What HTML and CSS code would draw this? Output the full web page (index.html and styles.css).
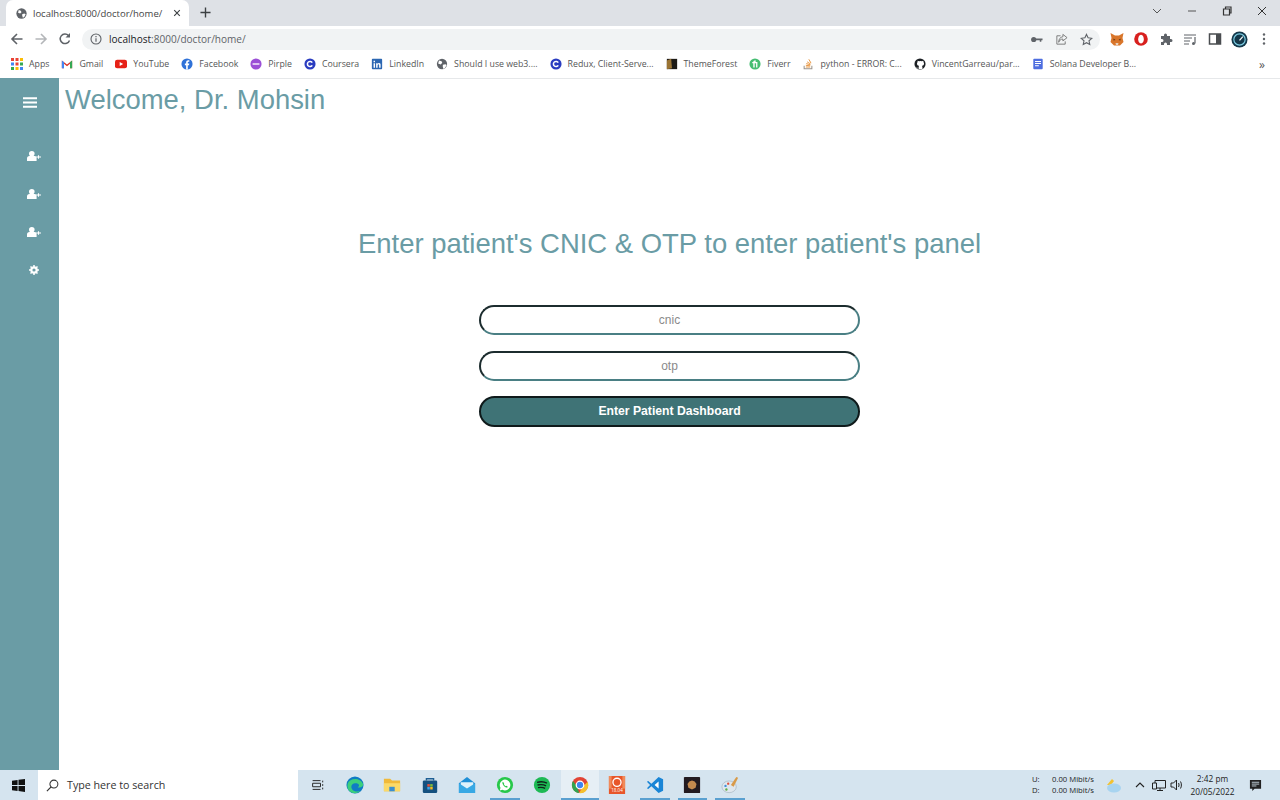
FILE: index.html
```html
<!DOCTYPE html>
<html lang="en">
<head>
  <meta charset="UTF-8">
  <title>localhost:8000/doctor/home/</title>
  <link rel="stylesheet" href="styles.css">
</head>
<body>
  <header class="chrome">
    <div class="tabstrip">
      <div class="tab">
        <svg class="tab-icon" viewBox="0 0 16 16"><circle cx="8" cy="8" r="7.500" fill="#5f6368"/><path d="M4 3l3 1 1 2-2 2-3-1zM9 9l3-1 2 1-2 4-2 1-1-3z" fill="#fff"/></svg>
        <span class="tab-title">localhost:8000/doctor/home/</span>
        <svg class="tab-close" viewBox="0 0 10 10"><path d="M1.500 1.500l7 7M8.500 1.500l-7 7" stroke="#3c4043" stroke-width="1.400"/></svg>
      </div>
      <svg class="new-tab" viewBox="0 0 12 12"><path d="M6 .5v11M.5 6h11" stroke="#3c4043" stroke-width="1.500"/></svg>
      <div class="window-controls">
        <svg class="win-btn" viewBox="0 0 12 12"><path d="M2 4l4 4 4-4" fill="none" stroke="#555" stroke-width="1"/></svg>
        <svg class="win-btn" viewBox="0 0 12 12"><path d="M2 6h8" stroke="#555" stroke-width="1"/></svg>
        <svg class="win-btn" viewBox="0 0 12 12"><path d="M2.500 4h6v6h-6zM4.500 4V2h5.500v6H8.500" fill="none" stroke="#333" stroke-width="1.200"/></svg>
        <svg class="win-btn" viewBox="0 0 12 12"><path d="M2 2l8 8M10 2l-8 8" stroke="#333" stroke-width="1"/></svg>
      </div>
    </div>

    <div class="toolbar">
      <svg class="nav-btn" viewBox="0 0 14 14"><path d="M12.500 7H2M7 2L2 7l5 5" fill="none" stroke="#5f6368" stroke-width="1.600"/></svg>
      <svg class="nav-btn" viewBox="0 0 14 14"><path d="M1.500 7H12M7 2l5 5-5 5" fill="none" stroke="#b4b6b9" stroke-width="1.600"/></svg>
      <svg class="nav-btn" viewBox="0 0 14 14"><path d="M11.500 8.500A4.800 4.800 0 1 1 10.500 3.500" fill="none" stroke="#5f6368" stroke-width="1.500"/><path d="M12 1v4.500H7.500z" fill="#5f6368"/></svg>
      <div class="omnibox">
        <svg class="info-icon" viewBox="0 0 12 12"><circle cx="6" cy="6" r="5" fill="none" stroke="#5f6368" stroke-width="1.100"/><path d="M6 5.200v3.600M6 3v1.200" stroke="#5f6368" stroke-width="1.200"/></svg>
        <span class="url"><b>localhost</b>:8000/doctor/home/</span>
        <div class="omni-actions">
          <svg class="omni-icon" viewBox="0 0 14 14"><circle cx="4" cy="7" r="2.800" fill="#5f6368"/><path d="M6 5.800h7.500v2H12.200v1.500H10.500V7.800H6z" fill="#5f6368"/></svg>
          <svg class="omni-icon" viewBox="0 0 14 14"><path d="M6 3H2v9h9V9" fill="none" stroke="#777" stroke-width="1"/><path d="M8.500 1.500L13 5l-4.500 3.500V6.500C6 6.500 4.800 8 4 10c0-3.500 1.500-5.500 4.500-6z" fill="none" stroke="#777" stroke-width="1"/></svg>
          <svg class="omni-icon" viewBox="0 0 14 14"><path d="M7 1.500l1.700 3.700 4 .5-3 2.700.8 4L7 10.400l-3.500 2 .8-4-3-2.700 4-.5z" fill="none" stroke="#5f6368" stroke-width="1.200"/></svg>
        </div>
      </div>
      <div class="extensions">
        <div class="ext"><svg viewBox="0 0 14 14"><path d="M.5 1L5 3.500h4L13.500 1l-1 5 1 4-3.500 3.500H4L.5 10l1-4z" fill="#d9762b"/><path d="M3.500 6.500l2 1.500-2 .5zM10.500 6.500l-2 1.500 2 .5z" fill="#5a3414"/><path d="M5.500 11h3l-.5 2H6z" fill="#e9d3be"/></svg></div>
        <div class="ext"><svg viewBox="0 0 14 14"><circle cx="7" cy="7" r="6.800" fill="#d8201e"/><path d="M7 2.800c2 0 2.800 2.500 2.800 4.500S9 11.500 7 11.500 4.200 9.300 4.200 7.300 5 2.800 7 2.800z" fill="#fff"/></svg></div>
        <div class="ext"><svg viewBox="0 0 14 14"><path d="M2 4h3V3a1.500 1.500 0 0 1 3 0v1h3v3h1a1.500 1.500 0 0 1 0 3h-1v3H8v-1a1.500 1.500 0 0 0-3 0v1H2v-3h1a1.500 1.500 0 0 0 0-3H2z" fill="#5f6368"/></svg></div>
        <div class="ext"><svg viewBox="0 0 14 14"><path d="M1 3h12M1 6h8M1 9h6M1 12h5" stroke="#5f6368" stroke-width="1"/><path d="M12 5v6.500" stroke="#5f6368" stroke-width="1.200"/><circle cx="10.500" cy="11.500" r="1.500" fill="#5f6368"/></svg></div>
        <div class="ext"><svg viewBox="0 0 14 14"><path d="M1.500 2h11v10h-11z" fill="#fff" stroke="#4a4d50" stroke-width="1.500"/><path d="M8 2h4.500v10H8z" fill="#4a4d50"/></svg></div>
        <div class="ext ext-big"><svg viewBox="0 0 18 18"><circle cx="9" cy="9" r="8.500" fill="#14384a"/><circle cx="9" cy="9" r="6" fill="none" stroke="#7fd0e6" stroke-width="1.200"/><path d="M9 10l3.500-4" stroke="#fff" stroke-width="1.300"/></svg></div>
        <div class="ext"><svg viewBox="0 0 14 14"><circle cx="7" cy="2.500" r="1.200" fill="#5f6368"/><circle cx="7" cy="7" r="1.200" fill="#5f6368"/><circle cx="7" cy="11.500" r="1.200" fill="#5f6368"/></svg></div>
      </div>
    </div>

    <nav class="bookmarks">
      <a class="bm bm-apps"><svg viewBox="0 0 12 12"><g fill="#ea4335"><rect width="3" height="3"/><rect x="4.500" width="3" height="3"/></g><rect x="9" width="3" height="3" fill="#fbbc04"/><rect y="4.500" width="3" height="3" fill="#4285f4"/><rect x="4.500" y="4.500" width="3" height="3" fill="#ea4335"/><rect x="9" y="4.500" width="3" height="3" fill="#34a853"/><rect y="9" width="3" height="3" fill="#34a853"/><rect x="4.500" y="9" width="3" height="3" fill="#fbbc04"/><rect x="9" y="9" width="3" height="3" fill="#4285f4"/></svg>Apps</a>
      <a class="bm bm-gmail"><svg viewBox="0 0 14 14"><path d="M1 3l6 4.500L13 3v9h-2.500V6.800L7 9.500 3.500 6.800V12H1z" fill="#d93025"/><path d="M1 3v9h2.500V5z" fill="#4285f4"/><path d="M13 3v9h-2.500V5z" fill="#34a853"/></svg>Gmail</a>
      <a class="bm bm-youtube"><svg viewBox="0 0 14 14"><rect y="2" width="14" height="10" rx="2.500" fill="#e62117"/><path d="M5.500 4.800L9.500 7l-4 2.200z" fill="#fff"/></svg>YouTube</a>
      <a class="bm bm-facebook"><svg viewBox="0 0 14 14"><circle cx="7" cy="7" r="6.500" fill="#2f72d8"/><path d="M6 13.500V8.500H4.500V6.500H6V5c0-1.700 1-2.500 2.500-2.500h1.200v1.900h-.9c-.7 0-.9.400-.9 1v1h1.800L9.300 8.500H7.900v5z" fill="#fff"/></svg>Facebook</a>
      <a class="bm bm-pirple"><svg viewBox="0 0 14 14"><circle cx="7" cy="7" r="6.500" fill="#9b4fd6"/><rect x="3" y="6" width="8" height="2" fill="#e8d7f6"/></svg>Pirple</a>
      <a class="bm bm-coursera"><svg viewBox="0 0 14 14"><circle cx="7" cy="7" r="6.500" fill="#2a3cc0"/><path d="M9.600 8.500a3 3 0 1 1 0-3" fill="none" stroke="#fff" stroke-width="1.800"/></svg>Coursera</a>
      <a class="bm bm-linkedin"><svg viewBox="0 0 14 14"><rect x="1" y="1" width="12" height="12" rx="1" fill="#2c67b2"/><path d="M3 6h1.700v5.500H3zM3 3.200h1.700v1.700H3zM6 6h1.600v.8c.4-.6 1-1 1.800-1 1.300 0 1.800.9 1.800 2.200v3.500H9.500V8.300c0-.7-.2-1.100-.8-1.100s-1 .4-1 1.200v3.100H6z" fill="#fff"/></svg>LinkedIn</a>
      <a class="bm bm-web3"><svg viewBox="0 0 14 14"><circle cx="7" cy="7" r="6" fill="#5f6368"/><path d="M3.500 2.800l3 1 .8 1.800L5.500 7.500l-3-1zM8 8l3-.8 1.500 1-2 3.500-1.800 1-.8-2.500z" fill="#fff"/></svg>Should I use web3....</a>
      <a class="bm bm-redux"><svg viewBox="0 0 14 14"><circle cx="7" cy="7" r="6.500" fill="#2a3cc0"/><path d="M9.600 8.500a3 3 0 1 1 0-3" fill="none" stroke="#fff" stroke-width="1.800"/></svg>Redux, Client-Serve...</a>
      <a class="bm bm-forest"><svg viewBox="0 0 14 14"><rect x="1" y="1" width="12" height="12" fill="#1c1a16"/><path d="M1 3l5-2 1 11-6 1z" fill="#9a7434"/></svg>ThemeForest</a>
      <a class="bm bm-fiverr"><svg viewBox="0 0 14 14"><circle cx="7" cy="7" r="6.500" fill="#45bd72"/><path d="M5 11V6H3.800V4.800H5C5 3.500 6 3 8 3v1.300c-1 0-1.400.1-1.400.5h3.200V11H8.300V6H6.600v5z" fill="#fff"/></svg>Fiverr</a>
      <a class="bm bm-python"><svg viewBox="0 0 14 14"><path d="M2.500 9v3.500h9V9" fill="none" stroke="#9a938a" stroke-width="1.200"/><path d="M4.500 10.500h5M4.500 8.500l5 .6M5 6.500l4.700 1.500M6 4.500l4 2.500M8 1.500L10.500 6" stroke="#e8933a" stroke-width="1.100"/></svg>python - ERROR: C...</a>
      <a class="bm bm-github"><svg viewBox="0 0 14 14"><circle cx="7" cy="7" r="6.500" fill="#1b1f23"/><path d="M4 12.800V11c-1.500.2-2-.5-2.500-1.500M9.800 12.800V10.500c0-.7-.2-1.100-.5-1.300 1.500-.2 2.400-1 2.400-2.700 0-.8-.3-1.300-.7-1.800.1-.5.100-1-.1-1.600-.6 0-1.100.3-1.600.7a6 6 0 0 0-3.400 0C5.400 3.400 4.900 3.100 4.300 3.100c-.2.600-.2 1.100-.1 1.600-.4.500-.7 1-.7 1.800 0 1.700.9 2.500 2.400 2.700-.3.200-.5.600-.5 1.300v2.300z" fill="#fff"/></svg>VincentGarreau/par...</a>
      <a class="bm bm-solana"><svg viewBox="0 0 14 14"><rect x="1.500" y="1" width="11" height="12" rx="1" fill="#4e6ee0"/><path d="M3.500 4h7M3.500 6.500h7M3.500 9h4.500" stroke="#fff" stroke-width="1.200"/></svg>Solana Developer B...</a>
      <span class="bm-more">»</span>
    </nav>
  </header>

  <div class="app">
    <aside class="sidebar">
      <svg class="menu-icon" viewBox="0 0 14 11"><path d="M0 1.200h14M0 5.500h14M0 9.800h14" stroke="#fff" stroke-width="2"/></svg>
      <ul class="side-nav">
        <li><svg viewBox="0 0 14 10"><path d="M2 2.600a2.800 2.600 0 0 1 5.600 0c0 1-.5 2-1 2.400h1c1.400 0 2 1 2 2.500V10H0V7.500C0 6 .8 5 2.500 5h.5C2.400 4.500 2 3.600 2 2.600z" fill="#fff"/><path d="M8.500 6H14M11.500 4.300v3.400" stroke="#fff" stroke-width="1.100"/></svg></li>
        <li><svg viewBox="0 0 14 10"><path d="M2 2.600a2.800 2.600 0 0 1 5.600 0c0 1-.5 2-1 2.400h1c1.400 0 2 1 2 2.500V10H0V7.500C0 6 .8 5 2.500 5h.5C2.400 4.500 2 3.600 2 2.600z" fill="#fff"/><path d="M8.500 6H14M11.500 4.300v3.400" stroke="#fff" stroke-width="1.100"/></svg></li>
        <li><svg viewBox="0 0 14 10"><path d="M2 2.600a2.800 2.600 0 0 1 5.600 0c0 1-.5 2-1 2.400h1c1.400 0 2 1 2 2.500V10H0V7.500C0 6 .8 5 2.500 5h.5C2.400 4.500 2 3.600 2 2.600z" fill="#fff"/><path d="M8.500 6H14M11.500 4.300v3.400" stroke="#fff" stroke-width="1.100"/></svg></li>
        <li><svg class="cog" viewBox="0 0 10 10"><circle cx="5" cy="5" r="2.700" fill="none" stroke="#fff" stroke-width="2.200"/><path d="M5 0v2M5 8v2M0 5h2M8 5h2M1.500 1.500l1.300 1.300M7.200 7.200l1.300 1.300M8.500 1.500L7.200 2.800M2.800 7.200L1.500 8.500" stroke="#fff" stroke-width="1.500"/></svg></li>
      </ul>
    </aside>

    <main class="content">
      <h1 class="welcome">Welcome, Dr. Mohsin</h1>
      <h2 class="prompt">Enter patient's CNIC &amp; OTP to enter patient's panel</h2>
      <form class="otp-form">
        <input class="field" type="text" placeholder="cnic">
        <input class="field" type="text" placeholder="otp">
        <button class="submit" type="button">Enter Patient Dashboard</button>
      </form>
    </main>
  </div>

  <footer class="taskbar">
    <svg class="start" viewBox="0 0 14 14"><path d="M0 2l6-1v5.500H0zM7 .8L14 0v6.500H7zM0 7.500h6V13l-6-1zM7 7.500h7V14l-7-1z" fill="#111"/></svg>
    <div class="search">
      <svg viewBox="0 0 14 14"><circle cx="8.500" cy="5.500" r="4.300" fill="none" stroke="#333" stroke-width="1.100"/><path d="M5.500 8.500L1 13" stroke="#333" stroke-width="1.300"/></svg>
      <span>Type here to search</span>
    </div>
    <div class="task-icons">
      <div class="task"><svg class="task-view" viewBox="0 0 16 16"><path d="M3 3h9M3 13h9M3 6h9v4H3zM14.500 3v2M14.500 7v2M14.500 11v2" fill="none" stroke="#222" stroke-width="1.100"/></svg></div>
      <div class="task"><svg viewBox="0 0 20 20"><circle cx="10" cy="10" r="9.500" fill="#0f7cc4"/><path d="M2 8C4 2 16 1 19 9c.500 3-3 4.500-6 3.500 3-2 1-5-3-4.500C6 8.500 5 12 7 15c2 2.500 6 3 9 1.500-3 3.500-9 3.500-12 .5C1.500 14.500 1 11 2 8z" fill="#3ccf7c"/></svg></div>
      <div class="task"><svg viewBox="0 0 20 20"><path d="M1 3h7l2 2h9v12H1z" fill="#f0b93a"/><path d="M1 8h18v9H1z" fill="#fbd968"/><path d="M7 12h6v5H7z" fill="#3a8fd0"/></svg></div>
      <div class="task"><svg viewBox="0 0 20 20"><path d="M6 5V3h8v2" fill="none" stroke="#1d5e94" stroke-width="1.500"/><rect x="2" y="5" width="16" height="14" rx="1.500" fill="#14507f"/><rect x="7" y="9" width="2.800" height="2.800" fill="#e8503a"/><rect x="10.200" y="9" width="2.800" height="2.800" fill="#7fba3a"/><rect x="7" y="12.200" width="2.800" height="2.800" fill="#3aa4e8"/><rect x="10.200" y="12.200" width="2.800" height="2.800" fill="#f5b81e"/></svg></div>
      <div class="task"><svg viewBox="0 0 20 20"><path d="M1 8l9-7 9 7v11H1z" fill="#1f8fd6"/><path d="M3 7h14v6l-7 4-7-4z" fill="#dff2fb"/><path d="M1 8l9 6 9-6v11H1z" fill="#38a8e4"/></svg></div>
      <div class="task open"><svg viewBox="0 0 20 20"><circle cx="10" cy="10" r="9" fill="#27c84a"/><path d="M10 4a6 6 0 0 1 0 12 6 6 0 0 1-2.800-.7L4.200 16l.8-2.900A6 6 0 0 1 10 4z" fill="#fff"/><path d="M7.500 6.500c-1 1 0 3.500 1.500 4.800s3.500 2 4.300 1l-1.500-1.500-1 .5c-1-.5-1.800-1.300-2.200-2.300l.6-1z" fill="#27c84a"/></svg></div>
      <div class="task"><svg viewBox="0 0 20 20"><circle cx="10" cy="10" r="9" fill="#1db954"/><path d="M4.500 7c4-1 8-.7 11 1M5 10c3.500-.8 7-.5 9.500 1M5.500 13c3-.6 5.800-.4 8 .8" fill="none" stroke="#10231a" stroke-width="1.500"/></svg></div>
      <div class="task open current"><svg viewBox="0 0 20 20"><circle cx="10" cy="10" r="9" fill="#e24434"/><path d="M18.400 6.500A9 9 0 0 1 9 19l4-7z" fill="#f6c02c"/><path d="M9 19A9 9 0 0 1 2.200 5.500L7 12z" fill="#32a350"/><circle cx="10" cy="10" r="4.200" fill="#3f85f0" stroke="#fff" stroke-width="1.400"/></svg></div>
      <div class="task"><svg viewBox="0 0 20 20"><rect x="1" y="0" width="18" height="20" fill="#e8562a"/><rect x="1" y="0" width="3" height="14" fill="#f08a5a"/><rect x="16" y="0" width="3" height="14" fill="#f08a5a"/><circle cx="10" cy="7" r="4.500" fill="none" stroke="#fff" stroke-width="1.500"/><text class="vm-label" x="10" y="18">18.04</text></svg></div>
      <div class="task open"><svg viewBox="0 0 20 20"><path d="M14 1l5 2.500v13L14 19 6 11.500 2.500 14.500 1 13.500 4.500 10 1 6.500 2.500 5.500 6 8.500z" fill="#1a85d6"/><path d="M14 6l-4.500 4L14 14z" fill="#fff"/></svg></div>
      <div class="task open"><svg viewBox="0 0 20 20"><rect x="1" y="1" width="18" height="18" rx="1" fill="#221a20"/><path d="M5 9l2-3 3-1 3 1 2 3-1 4-4 2-4-2z" fill="#c48a4e"/></svg></div>
      <div class="task open"><svg viewBox="0 0 20 20"><ellipse cx="9" cy="12" rx="8" ry="6.500" fill="#dfe7ee" stroke="#9aa9b5" stroke-width=".6"/><circle cx="5" cy="11" r="1.300" fill="#3f8fd8"/><circle cx="8" cy="8.500" r="1.300" fill="#e0503c"/><circle cx="6" cy="15" r="1.300" fill="#62b04a"/><path d="M11 10l6-9 2 1-5 10z" fill="#d89a4a"/></svg></div>
    </div>
    <div class="tray">
      <div class="netspeed">
        <div class="net-row"><span>U:</span><span>0.00 Mibit/s</span></div>
        <div class="net-row"><span>D:</span><span>0.00 Mibit/s</span></div>
      </div>
      <svg class="weather" viewBox="0 0 18 16"><path d="M3 8l5-6 2 2-3 4z" fill="#f2c230"/><ellipse cx="10" cy="11" rx="7" ry="4.500" fill="#a8d4f0"/></svg>
      <svg class="tray-chevron" viewBox="0 0 10 10"><path d="M1 7l4-4 4 4" fill="none" stroke="#222" stroke-width="1.100"/></svg>
      <svg class="tray-icon" viewBox="0 0 14 14"><path d="M3 2.500h10.500v7.500H3zM8 10v2.500M5 12.500h6" fill="none" stroke="#222" stroke-width="1"/><path d="M.5 5h4v6h-4z" fill="#d5e4ef" stroke="#222" stroke-width="1"/></svg>
      <svg class="tray-icon" viewBox="0 0 14 14"><path d="M1 5h2.500L6.500 2v10L3.500 9H1z" fill="none" stroke="#222" stroke-width="1"/><path d="M8.500 5c.7 1.200.7 2.800 0 4M10.500 3.500c1.200 2 1.200 5 0 7" fill="none" stroke="#222" stroke-width="1"/></svg>
      <div class="clock"><span>2:42 pm</span><span>20/05/2022</span></div>
      <svg class="notify" viewBox="0 0 14 14"><path d="M1 1h12v9.500H6L3.500 13v-2.500H1z" fill="#222"/><path d="M3 3.500h8M3 5.500h8M3 7.500h5" stroke="#d5e4ef" stroke-width=".9"/></svg>
    </div>
  </footer>
</body>
</html>
```

FILE: styles.css
```css
* {
  box-sizing: border-box;
}
html, body {
  height: 100%;
}
body {
  margin: 0;
  display: flex;
  flex-direction: column;
  height: 800px;
  overflow: hidden;
  background: #fff;
  font-family: "Open Sans", "Liberation Sans", sans-serif;
}

/* browser chrome */
.chrome {
  flex: none;
  height: 78px;
}
.tabstrip {
  height: 26px;
  background: #dee1e6;
  display: flex;
  align-items: flex-end;
  padding-left: 6px;
}
.tab {
  width: 183px;
  height: 26px;
  background: #fff;
  border-radius: 7px 7px 0 0;
  display: flex;
  align-items: center;
  padding: 0 8px 0 10px;
  font-size: 9.5px;
  color: #444;
}
.tab-icon {
  width: 11px;
  height: 11px;
  margin-right: 6px;
}
.tab-title {
  flex: 1;
  white-space: nowrap;
}
.tab-close {
  width: 8px;
  height: 8px;
}
.new-tab {
  width: 11px;
  height: 11px;
  margin: 0 0 8px 11px;
}
.window-controls {
  margin-left: auto;
  align-self: stretch;
  display: flex;
  align-items: center;
  gap: 23px;
  padding: 0 12px 4px 0;
}
.win-btn {
  width: 12px;
  height: 12px;
}
.toolbar {
  height: 26px;
  background: #fff;
  display: flex;
  align-items: center;
  padding-left: 5px;
}
.nav-btn {
  width: 14px;
  height: 14px;
  margin: 0 5px;
}
.nav-btn + .nav-btn {
  margin-left: 5px;
}
.omnibox {
  width: 1018px;
  height: 21px;
  margin-left: 5px;
  background: #f1f3f4;
  border-radius: 11px;
  display: flex;
  align-items: center;
  padding: 0 7px 0 8px;
}
.info-icon {
  width: 12px;
  height: 12px;
  margin-right: 7px;
}
.url {
  font-size: 10.05px;
  line-height: 23px;
  color: #5f6368;
}
.url b {
  font-weight: 400;
  color: #202124;
}
.omni-actions {
  margin-left: auto;
  display: flex;
  gap: 12px;
}
.omni-icon {
  width: 13px;
  height: 13px;
}
.extensions {
  flex: 1;
  display: flex;
  align-items: center;
  padding-left: 4.5px;
}
.ext {
  flex: none;
  width: 24.5px;
  display: flex;
  justify-content: center;
}
.ext svg {
  width: 14px;
  height: 14px;
}
.ext-big svg {
  width: 17px;
  height: 17px;
}
.bookmarks {
  height: 26px;
  background: #fff;
  display: flex;
  align-items: center;
  gap: 12px;
  padding: 0 0 2px 11px;
  font-size: 8.77px;
  color: #555;
}
.bm {
  display: flex;
  align-items: center;
  white-space: nowrap;
  gap: 6px;
}
.bm svg {
  width: 12px;
  height: 12px;
}
.bm-more {
  margin-left: auto;
  padding-right: 15px;
  font-size: 12px;
}

/* app */
.app {
  flex: 1;
  display: flex;
  min-height: 0;
}
.sidebar {
  flex: none;
  width: 59px;
  background: #6a9ca5;
  padding-top: 19px;
}
.menu-icon {
  display: block;
  width: 14px;
  height: 11px;
  margin-left: 23px;
}
.side-nav {
  list-style: none;
  margin: 43px 0 0;
  padding: 0 0 0 27px;
  display: flex;
  flex-direction: column;
  gap: 28px;
}
.side-nav li {
  height: 10px;
  display: flex;
}
.side-nav svg {
  width: 14px;
  height: 10px;
}
.side-nav .cog {
  width: 10px;
  margin-left: 2px;
}
.content {
  flex: 1;
  min-width: 0;
  border-top: 1px solid #e6e8ea;
  font-family: "Liberation Sans", Arial, sans-serif;
  color: #6a9ca5;
}
.welcome {
  margin: 0;
  padding: 5px 0 0 6px;
  font-size: 27.45px;
  line-height: 32px;
  font-weight: 400;
}
.prompt {
  margin: 112px 0 0;
  font-size: 27.45px;
  line-height: 32px;
  font-weight: 400;
  text-align: center;
}
.otp-form {
  width: 381px;
  margin: 45px auto 0;
  display: flex;
  flex-direction: column;
  gap: 16px;
}
.field {
  height: 30px;
  border: 2px solid;
  border-color: #1c2c2e #4a7f84 #4a7f84 #1c2c2e;
  border-radius: 15px;
  background: #fff;
  outline: none;
  text-align: center;
  font-family: inherit;
  font-size: 12px;
}
.field::placeholder {
  color: #8a8a8a;
}
.submit {
  height: 31px;
  margin-top: -1px;
  padding-bottom: 3px;
  border: 2px solid #0f1a1b;
  border-radius: 16px;
  background: #3f7376;
  color: #fff;
  font-family: inherit;
  font-size: 12.2px;
  font-weight: 700;
}

/* windows taskbar */
.taskbar {
  flex: none;
  height: 30px;
  background: #d5e4ef;
  display: flex;
  align-items: center;
  font-size: 11px;
  color: #222;
}
.start {
  width: 13px;
  height: 13px;
  margin: 0 13px 0 12px;
}
.search {
  width: 260px;
  height: 30px;
  background: #fff;
  display: flex;
  align-items: center;
  padding-left: 8px;
  gap: 8px;
  font-size: 10.7px;
  color: #333;
}
.search svg {
  width: 13px;
  height: 13px;
}
.task-icons {
  display: flex;
  margin-left: 0.5px;
}
.task {
  position: relative;
  width: 37.5px;
  height: 30px;
  display: flex;
  align-items: center;
  justify-content: center;
}
.task svg {
  width: 18px;
  height: 18px;
}
.task .task-view {
  width: 14px;
  height: 14px;
}
.task.open::after {
  content: "";
  position: absolute;
  left: 4px;
  right: 4px;
  bottom: 0;
  height: 2px;
  background: #5aa0d0;
}
.task.current {
  background: #e6eff5;
}
.task.current::after {
  left: 0;
  right: 0;
}
.vm-label {
  font-size: 5px;
  fill: #fff;
  text-anchor: middle;
  font-family: "Open Sans", sans-serif;
}
.tray {
  margin-left: auto;
  display: flex;
  align-items: center;
  height: 30px;
  font-size: 8.3px;
}
.netspeed {
  width: 62px;
  line-height: 11px;
  margin-right: 10px;
  font-size: 7.7px;
}
.net-row {
  display: flex;
  justify-content: space-between;
}
.weather {
  width: 18px;
  height: 16px;
  margin-right: 13px;
}
.tray-chevron {
  width: 10px;
  height: 10px;
  margin-right: 7px;
}
.tray-icon {
  width: 14px;
  height: 14px;
  margin-right: 4px;
}
.clock {
  width: 46px;
  display: flex;
  flex-direction: column;
  align-items: center;
  line-height: 13.5px;
  margin-left: 1.5px;
}
.notify {
  width: 13px;
  height: 13px;
  margin: 0 18px 0 13.5px;
}
```
